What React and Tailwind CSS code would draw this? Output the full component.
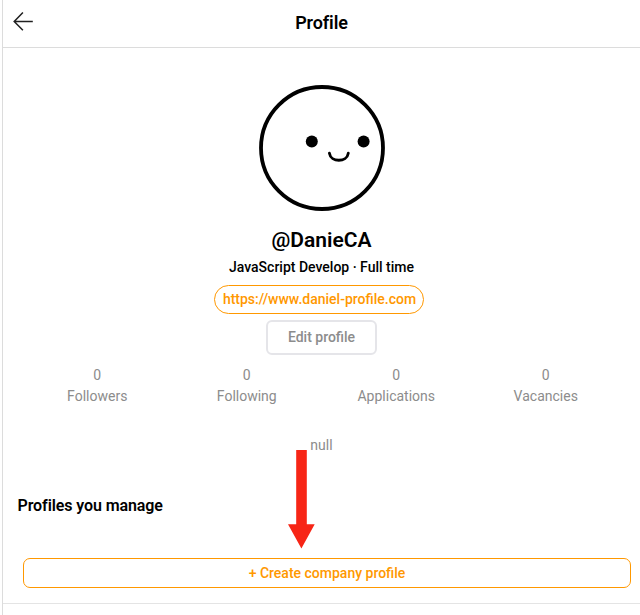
const stats = [
  { label: 'Followers', value: 0 },
  { label: 'Following', value: 0 },
  { label: 'Applications', value: 0 },
  { label: 'Vacancies', value: 0 },
];

function Header() {
  return (
    <header className="grid h-12 grid-cols-[40px_1fr_40px] items-center border-b border-[#dcdcdc] pb-0.5">
      <button type="button" aria-label="Back" className="flex pl-[10px] pb-1">
        <svg width="21" height="20" viewBox="0 0 21 20" fill="none" stroke="#202020" strokeWidth="1.5">
          <path d="M19.8 10.5H1.3M9.9 1.5L1.2 10.5L9.9 19.2" />
        </svg>
      </button>
      <h1 className="text-center text-[18px] leading-6 font-semibold tracking-[-0.1px]">Profile</h1>
    </header>
  );
}

function Avatar() {
  return (
    <svg className="ml-px" width="128" height="128" viewBox="0 0 128 128" fill="none" stroke="#000">
      <circle cx="64" cy="64" r="61" strokeWidth="3.8" />
      <circle cx="53.8" cy="57.4" r="6" fill="#000" stroke="none" />
      <circle cx="105.6" cy="57.4" r="6" fill="#000" stroke="none" />
      <path d="M71.4 69.2C72.9 78.6 88.8 78.6 90.3 69.2" strokeWidth="2.8" strokeLinecap="round" />
    </svg>
  );
}

export default function App() {
  return (
    <div className="h-[615px] overflow-hidden bg-white pl-0.5 font-[Roboto,sans-serif] text-black">
      <main className="relative h-full border-l border-[#dcdcdc]">
        <Header />
        <section className="flex flex-col items-center pt-9">
          <Avatar />
          <h2 className="mt-4 text-[21px] leading-6 font-semibold">@DanieCA</h2>
          <p className="mt-[5px] text-[14px] leading-5 font-medium">JavaScript Develop · Full time</p>
          <a className="mt-2 mr-[5px] flex h-[29px] w-[210px] items-center justify-center rounded-full border border-[#ff9800] pb-px pl-px text-[14px] font-medium text-[#ff9800]">
            https://www.daniel-profile.com
          </a>
          <button type="button" className="mt-1.5 h-[35px] w-[111px] rounded-md border-2 border-[#e5e5e9] text-[14px] font-medium text-[#8c8c8c]">
            Edit profile
          </button>
          <dl className="mt-2.5 grid w-[598px] grid-cols-4 text-center text-[14px] leading-[21px] text-[#8c8c8c]">
            {stats.map((s) => (
              <div key={s.label} className="flex flex-col-reverse">
                <dt>{s.label}</dt>
                <dd>{s.value}</dd>
              </div>
            ))}
          </dl>
          <p className="mt-7 text-[14px] leading-[21px] text-[#8c8c8c]">null</p>
        </section>
        <section className="mt-10 border-b border-[#e4e4e4] pb-[15px]">
          <h3 className="pl-[14.5px] text-[16px] leading-5 font-semibold tracking-[-0.1px]">Profiles you manage</h3>
          <div className="mt-[42px] pr-[9px] pl-5">
            <button type="button" className="h-[30px] w-full rounded-[7px] border border-[#ff9800] text-[14px] font-medium text-[#ff9800]">
              + Create company profile
            </button>
          </div>
        </section>
        <svg className="absolute top-[449px] left-[285px]" width="28" height="101" viewBox="0 0 28 101">
          <path d="M8.2 1H18.8V75.2H26.7L13.4 99.5L0 75.2H8.2Z" fill="#f72516" />
        </svg>
      </main>
    </div>
  );
}
